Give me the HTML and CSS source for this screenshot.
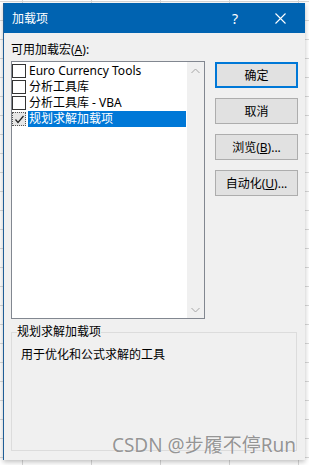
FILE: index.html
```html
<!DOCTYPE html>
<html lang="zh-CN">
<head>
    <meta charset="UTF-8">
    <meta name="viewport" content="width=device-width, initial-scale=1.0">
    <title>加载项</title>
    <link rel="stylesheet" href="styles.css">
</head>
<body>
    <div class="dialog">
        <div class="titlebar">
            <span class="title">加载项</span>
            <span class="tb-btn help">?</span>
            <span class="tb-btn close">
                <svg width="11" height="11" viewBox="0 0 11 11"><path d="M0.5 0.5L10.5 10.5M10.5 0.5L0.5 10.5" stroke="#fff" stroke-width="1.1" fill="none"/></svg>
            </span>
        </div>

        <div class="content">
            <div class="avail-label">可用加载宏(<u>A</u>):</div>
            <div class="row">
                <div class="listbox">
                    <div class="items">
                        <div class="item"><span class="check"></span><span class="name">Euro Currency Tools</span></div>
                        <div class="item"><span class="check"></span><span class="name">分析工具库</span></div>
                        <div class="item"><span class="check"></span><span class="name">分析工具库 - VBA</span></div>
                        <div class="item selected">
                            <span class="check checked">
                                <svg width="11" height="11" viewBox="0 0 11 11"><path d="M1.5 5.5L4 8.5L9.5 2" stroke="#222" stroke-width="1.2" fill="none"/></svg>
                            </span>
                            <span class="name">规划求解加载项</span>
                        </div>
                    </div>
                    <div class="scrollbar">
                        <span class="arrow">
                            <svg width="9" height="6" viewBox="0 0 9 6"><path d="M0.5 5L4.5 1L8.5 5" stroke="#a6a6a6" stroke-width="1" fill="none"/></svg>
                        </span>
                        <span class="arrow">
                            <svg width="9" height="6" viewBox="0 0 9 6"><path d="M0.5 1L4.5 5L8.5 1" stroke="#a6a6a6" stroke-width="1" fill="none"/></svg>
                        </span>
                    </div>
                </div>

                <div class="buttons">
                    <button class="btn default">确定</button>
                    <button class="btn">取消</button>
                    <button class="btn">浏览(<u>B</u>)...</button>
                    <button class="btn">自动化(<u>U</u>)...</button>
                </div>
            </div>

            <fieldset class="group">
                <legend>规划求解加载项</legend>
                <p class="desc">用于优化和公式求解的工具</p>
            </fieldset>
        </div>
    </div>

    <div class="watermark">CSDN @步履不停Run</div>
</body>
</html>
```

FILE: styles.css
```css
body {
    margin: 0;
    width: 309px;
    height: 465px;
    overflow: hidden;
    box-sizing: border-box;
    padding: 3px 4px 5px 3px;
    position: relative;
    font-family: "Noto Sans", "Noto Sans CJK SC", sans-serif;
    font-size: 12px;
    color: #000;
    background-color: #fff;
    background-image:
        linear-gradient(#d8d8d8 1px, transparent 1px),
        linear-gradient(90deg, #d8d8d8 1px, transparent 1px);
    background-size: 69px 19px;
    background-position: 22px 1px;
}

.dialog {
    width: 302px;
    height: 457px;
    box-sizing: border-box;
    background-color: #f0f0f0;
    border-left: 1px solid #1f5e97;
    box-shadow: 0 2px 5px rgba(0, 0, 0, 0.25);
    display: flex;
    flex-direction: column;
}

.titlebar {
    height: 30px;
    flex-shrink: 0;
    background-color: #0063b1;
    color: #fff;
    display: flex;
    align-items: center;
    padding: 0 3px 0 8px;
}

    .titlebar .title {
        flex: 1;
        font-size: 12px;
    }

.tb-btn {
    display: flex;
    justify-content: center;
    align-items: center;
    height: 30px;
}

.help {
    width: 46px;
    font-size: 14px;
}

.close {
    width: 44px;
}

.content {
    flex: 1;
    display: flex;
    flex-direction: column;
    padding: 9px 7px 9px 7px;
}

.avail-label {
    line-height: 16px;
    height: 16px;
    margin-bottom: 3px;
}

.row {
    display: flex;
    gap: 10px;
}

.listbox {
    width: 194px;
    height: 258px;
    box-sizing: border-box;
    border: 1px solid #828790;
    background-color: #fff;
    display: flex;
}

.items {
    flex: 1;
    padding-top: 1px;
}

.item {
    display: flex;
    align-items: center;
    height: 16px;
}

.check {
    width: 14px;
    height: 14px;
    box-sizing: border-box;
    border: 1px solid #333;
    background-color: #fff;
    margin-right: 2px;
    flex-shrink: 0;
    display: flex;
    justify-content: center;
    align-items: center;
}

    .check.checked {
        border: 1px dotted #555;
        background-color: #e6e6e6;
    }

.item .name {
    flex: 1;
    line-height: 16px;
    padding-left: 1px;
    white-space: nowrap;
}

.item.selected .name {
    background-color: #0078d7;
    color: #fff;
    margin-right: 1px;
}

.scrollbar {
    width: 17px;
    background-color: #f0f0f0;
    display: flex;
    flex-direction: column;
    justify-content: space-between;
}

.arrow {
    height: 17px;
    display: flex;
    justify-content: center;
    align-items: center;
}

.buttons {
    display: flex;
    flex-direction: column;
    gap: 10px;
    padding-top: 1px;
}

.btn {
    width: 83px;
    height: 26px;
    box-sizing: border-box;
    border: 1px solid #adadad;
    background-color: #e1e1e1;
    font: inherit;
    color: #000;
    padding: 0;
    display: flex;
    justify-content: center;
    align-items: center;
}

    .btn.default {
        border-color: #0078d7;
        box-shadow: inset 0 0 0 1px #0078d7;
    }

.group {
    flex: 1;
    margin: 5px 1px 0 0;
    padding: 0 5px;
    border: 1px solid #dcdcdc;
}

    .group legend {
        padding: 0;
        line-height: 16px;
    }

.desc {
    margin: 7px 0 0 4px;
    line-height: 16px;
}

.watermark {
    position: absolute;
    right: 13px;
    bottom: 7px;
    font-size: 19px;
    color: rgba(120, 120, 120, 0.8);
    text-shadow: 0 0 1px #fff;
    white-space: nowrap;
}
```
